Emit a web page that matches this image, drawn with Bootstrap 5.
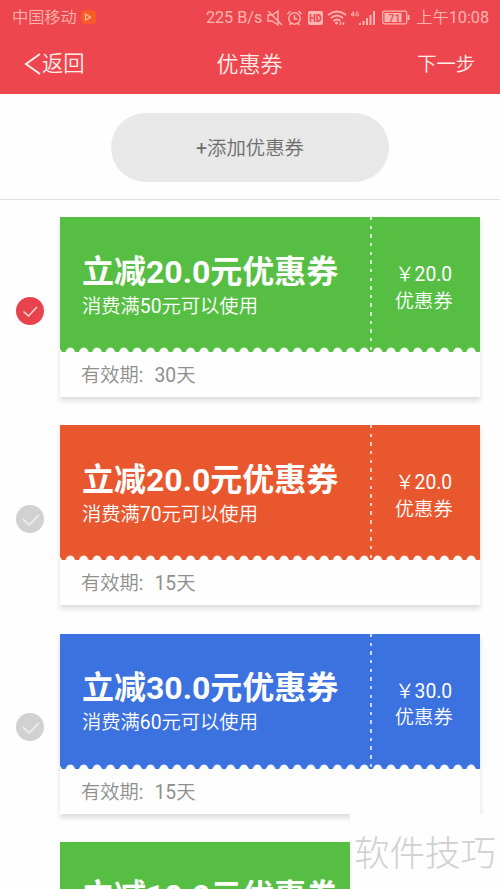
<!DOCTYPE html>
<html lang="zh-CN">
<head>
<meta charset="utf-8">
<meta name="viewport" content="width=device-width, initial-scale=1">
<title>优惠券</title>
<link href="https://cdn.jsdelivr.net/npm/bootstrap@5.3.0/dist/css/bootstrap.min.css" rel="stylesheet">
<style>
body{font-family:Roboto,"Noto Sans CJK SC",sans-serif;font-size:19.3px;background:#fefefe;height:889px}
.app-top{background:#ee464e;height:94px;color:#ffece8}
.status{height:34px;font-size:16.2px;line-height:34px;color:#ffb4b0;padding:1px 11px 0 12px;font-weight:350}
.titlebar{height:60px;line-height:62px;padding:0 25px 0 24px;font-weight:350}
.titlebar>*{flex:1 1 0}
.titlebar .heading{font-size:22px}
.back{font-size:21.3px}
.add-area{height:106px;border-bottom:1px solid #e2e2e2;padding-top:18.5px}
.add-btn{width:278px;height:69px;background:#e7e8e7;color:#6c6c6c;font-size:19.4px;font-weight:350}
.add-btn{padding:3px 0 0}
.list{padding:17px 20.5px 0 16px}
.item{height:180px;margin-bottom:28.3px}
.tick{width:28px;height:28px;margin-right:16px;margin-top:7px}
.coupon{height:180px;box-shadow:0 4px 5px rgba(0,0,0,.13)}
.face{height:135px;color:#fff}
.green{background:#56bf43}.orange{background:#e9572e}.blue{background:#3b72df}
.main-part{padding:33.5px 0 0 22px}
.amount{font-size:32px;font-weight:700;line-height:42px}
.rule{line-height:28px;font-weight:350}
.perforation{width:2px;height:135px;background:repeating-linear-gradient(#fffb 0 3.4px,transparent 3.4px 8.65px)}
.stub{width:107.5px;padding:45px 4px 0 0;line-height:26.5px;font-weight:350}
.scallop{display:block;width:100%;height:5px;margin-top:-5px}
.valid{line-height:48px;padding-left:21px;color:#8f8f8f;font-weight:350}
.valid .days{margin-left:11px}
.peek{height:47px}
.stamp{right:0;bottom:0;width:150px;height:75px;background:#fefefe;color:#d0d0d0;font-size:35.5px;line-height:73px;font-family:"Noto Sans CJK SC",sans-serif;font-weight:300}
</style>
</head>
<body class="position-relative overflow-hidden">
<svg class="position-absolute" width="0" height="0"><defs><pattern id="bumps" x="3.720" y="0" width="13.360" height="5" patternUnits="userSpaceOnUse"><path d="M1.700 5C2.600 3.600 3.600.5 6.680.5S10.700 3.600 11.700 5z" fill="#fefefe"/></pattern></defs></svg>
<header class="app-top">
  <div class="status d-flex align-items-center text-nowrap">
    <span>中国移动</span>
    <svg class="ms-1" width="15" height="15" viewBox="0 0 15 15"><rect width="15" height="14" rx="4" fill="#fb5a28"/><path d="M4.500 4l5 3.200-5 3z" fill="none" stroke="#ffc09c" stroke-width="1.300"/></svg>
    <span class="ms-auto fw-normal">225 B/s</span>
    <svg class="ms-1" width="112" height="24" viewBox="265 5 112 24" fill="none" stroke="#ffb4b0" stroke-width="1.400">
      <path d="M267 14h4l6-4v14l-6-4h-4zM267 10l14 14"/>
      <circle cx="293.500" cy="17.500" r="5.700"/><path d="M293.500 14v4h3M286.500 13l3-3M297.500 10l3 3M290 22l-1.500 2M297 22l1.500 2"/>
      <rect x="307" y="10" width="15" height="14" rx="2" fill="#ffb4b0" stroke="none"/>
      <path d="M309.500 13v8M313.500 13v8M309.500 17h4M316 13.700v6.600h1q2.500 0 2.500-3.300t-2.500-3.300z" stroke="#ee464e" stroke-width="1.500"/>
      <path d="M327 14q9-7 18 0M330 17q6-5 12 0M332.500 20q3.500-3 7 0" stroke-width="1.800"/><circle cx="335.500" cy="22" r="1.500" fill="#ffb4b0" stroke="none"/><path d="M339.500 21v3M342.500 21v3" stroke-width="1.500"/>
      <path d="M352.500 15.500v-5l-2.500 3.500h3.500M357.500 11.500q-2.500-1.500-2.500 1.500 0 3 2.500 1.500v-1.500h-1" stroke-width="1"/>
      <path d="M359 22v2M362.500 20v4M366 17v7M369.500 14v10M373 10v14" stroke-width="2"/>
    </svg>
    <svg width="30" height="15" viewBox="0 0 30 15" class="ms-1"><rect x=".7" y="1.200" width="24" height="12.600" rx="1.500" fill="none" stroke="#ffb4b0" stroke-width="1.200"/><rect x="2.500" y="3" width="17" height="9" fill="#ffb4b0"/><path d="M26.500 5v5" stroke="#ffb4b0" stroke-width="2"/><text x="6.500" y="11.500" font-size="10.500" font-weight="700" fill="#ee565b">71</text></svg>
    <span class="ms-1">上午<span class="fw-normal">10:08</span></span>
  </div>
  <div class="titlebar d-flex">
    <div class="back d-flex align-items-center"><svg width="18" height="24" viewBox="0 0 18 24" fill="none" stroke="#fff0ed" stroke-width="2"><path d="M16 2L2 12l14 10"/></svg><span>返回</span></div>
    <div class="heading text-center">优惠券</div>
    <div class="text-end">下一步</div>
  </div>
</header>
<section class="add-area d-flex justify-content-center">
  <button class="add-btn border-0 rounded-pill"><span class="fw-normal">+</span>添加优惠券</button>
</section>
<main class="list">
  <div class="item d-flex align-items-center">
    <svg class="tick flex-shrink-0" viewBox="0 0 28 28"><circle cx="14" cy="14" r="14" fill="#e8434d"/><path d="M7.500 14.500l5 4.500 8.500-9" fill="none" stroke="#ffd8d8" stroke-width="1.500"/></svg>
    <article class="coupon flex-grow-1">
      <div class="face green d-flex"><div class="main-part flex-grow-1"><div class="amount">立减20.0元优惠券</div><div class="rule">消费满<span class="fw-normal">50</span>元可以使用</div></div><div class="perforation"></div><div class="stub text-center">￥<span class="fw-normal">20.0</span><br>优惠券</div></div>
      <svg class="scallop"><rect width="100%" height="5" fill="url(#bumps)"/></svg><div class="valid">有效期<span class="fw-normal">:</span><span class="days"><span class="fw-normal">30</span>天</span></div>
    </article>
  </div>
  <div class="item d-flex align-items-center">
    <svg class="tick flex-shrink-0" viewBox="0 0 28 28"><circle cx="14" cy="14" r="14" fill="#d1d1d1"/><path d="M7 14l6 6 10-10" fill="none" stroke="#f2f2f2" stroke-width="1.500"/></svg>
    <article class="coupon flex-grow-1">
      <div class="face orange d-flex"><div class="main-part flex-grow-1"><div class="amount">立减20.0元优惠券</div><div class="rule">消费满<span class="fw-normal">70</span>元可以使用</div></div><div class="perforation"></div><div class="stub text-center">￥<span class="fw-normal">20.0</span><br>优惠券</div></div>
      <svg class="scallop"><rect width="100%" height="5" fill="url(#bumps)"/></svg><div class="valid">有效期<span class="fw-normal">:</span><span class="days"><span class="fw-normal">15</span>天</span></div>
    </article>
  </div>
  <div class="item d-flex align-items-center">
    <svg class="tick flex-shrink-0" viewBox="0 0 28 28"><circle cx="14" cy="14" r="14" fill="#d1d1d1"/><path d="M7 14l6 6 10-10" fill="none" stroke="#f2f2f2" stroke-width="1.500"/></svg>
    <article class="coupon flex-grow-1">
      <div class="face blue d-flex"><div class="main-part flex-grow-1"><div class="amount">立减30.0元优惠券</div><div class="rule">消费满<span class="fw-normal">60</span>元可以使用</div></div><div class="perforation"></div><div class="stub text-center">￥<span class="fw-normal">30.0</span><br>优惠券</div></div>
      <svg class="scallop"><rect width="100%" height="5" fill="url(#bumps)"/></svg><div class="valid">有效期<span class="fw-normal">:</span><span class="days"><span class="fw-normal">15</span>天</span></div>
    </article>
  </div>
  <div class="peek d-flex overflow-hidden">
    <div class="tick flex-shrink-0"></div>
    <div class="face green flex-grow-1"><div class="main-part"><div class="amount">立减10.0元优惠券</div></div></div>
  </div>
</main>
<div class="stamp position-absolute text-center">软件技巧</div>
<script src="https://cdn.jsdelivr.net/npm/bootstrap@5.3.0/dist/js/bootstrap.bundle.min.js"></script>
</body>
</html>
